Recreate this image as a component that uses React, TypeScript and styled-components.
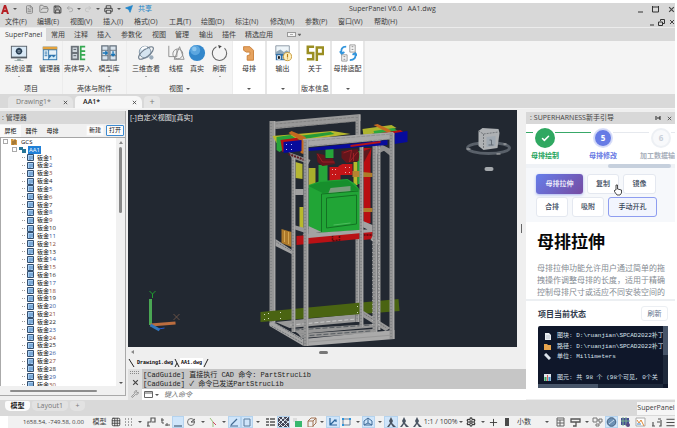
import React from 'react';
import styled, { createGlobalStyle, css } from 'styled-components';
import { Settings, Grid3x3, Menu, Send, Printer, Save, FileText, FolderOpen, Undo2, Redo2, Wrench, Check, Plus } from 'lucide-react';

const ui = '"Open Sans", "Noto Sans CJK SC", sans-serif';
const mono = '"Liberation Mono", "Noto Sans CJK SC", monospace';

const Global = createGlobalStyle`
  * { box-sizing: border-box; }
  body { margin: 0; background: #fff; font-family: ${ui}; font-size: 7px; line-height: 10px; color: #3c3c3c; }
  button, input, select { font: inherit; color: inherit; margin: 0; padding: 0; border: 0; background: none; border-radius: 0; white-space: nowrap; }
  ul, h1, h2, p { margin: 0; padding: 0; list-style: none; }
  svg { display: block; flex: none; }
`;

const Page = styled.div`
  height: 100vh; min-height: 400px; display: flex; flex-direction: column; overflow: hidden;
  padding: 3px 2px 0 0;
`;

/* ---------- title, menu and ribbon ---------- */
const TitleBar = styled.header`
  display: flex; align-items: center; height: 12px; background: #d8d8d8; padding-left: 1px;
`;
const QuickButton = styled.button<{ $w: number }>`
  display: flex; align-items: center; justify-content: center; width: ${p => p.$w}px; height: 12px;
`;
const ShareLink = styled.a`color: #2386c8; text-decoration: none; margin-left: 3px; width: 14px; white-space: nowrap;`;
const WindowTitle = styled.div`margin-left: 197px; flex: 1; white-space: pre;`;
const WindowButtons = styled.div<{ $gap: number }>`display: flex; gap: ${p => p.$gap}px; align-items: center; margin-left: auto;`;
const MenuBar = styled.nav`
  display: flex; align-items: center; height: 13px; background: #d8d8d8; padding: 2px 0 0 5px;
  border-bottom: 1px solid #ececec;
`;
const MenuItem = styled.button<{ $w: number }>`width: ${p => p.$w}px; text-align: left; height: 10px;`;
const RibbonTabs = styled.nav`display: flex; align-items: center; height: 13px; background: #d8d8d8;`;
const RibbonTab = styled.button<{ $w: number; $active?: boolean }>`
  width: ${p => p.$w}px; height: 13px; text-align: left; padding-left: 5px;
  background: ${p => (p.$active ? '#f4f4f4' : 'transparent')};
`;
const Ribbon = styled.div`display: flex; height: 53px; background: #f4f4f4; color: #333;`;
const RibbonGroup = styled.section<{ $w: number; $boxed?: boolean }>`
  width: ${p => p.$w}px; display: flex; flex-direction: column; justify-content: space-between;
  padding-top: 3px; border-right: 1px solid #ececec;
  ${p => p.$boxed && css`background: #fff; border-right: 2px solid #e6e6e6;`}
`;
const Tools = styled.div`display: flex;`;
const Tool = styled.button<{ $w: number }>`
  width: ${p => p.$w}px; display: flex; flex-direction: column; align-items: center; gap: 2px; line-height: 10px;
`;
const GroupLabel = styled.div`display: flex; height: 10px; align-items: center; justify-content: center; gap: 3px;`;
const Caret = styled.span`
  width: 0; height: 0; flex: none; border: 2px solid transparent; border-bottom-width: 0; border-top-color: #555;
`;
const TinyCaret = styled(Caret)`border-width: 1px 1px 0;`;

const DocTabs = styled.nav`
  display: flex; align-items: flex-end; height: 15px; background: #d9d9d9; padding-left: 8px; gap: 2px;
  border-bottom: 1px solid #f5f5f5;
`;
const DocTab = styled.div<{ $w: number; $active?: boolean }>`
  width: ${p => p.$w}px; height: 12px; display: flex; align-items: center; justify-content: space-between;
  padding: 0 5px 0 8px; font-size: 7px; border-radius: 4px 6px 0 0; color: ${p => (p.$active ? '#222' : '#777')};
  background: ${p => (p.$active ? '#f7f7f7' : '#e4e4e4')}; font-weight: ${p => (p.$active ? 600 : 400)};
`;
const AddTab = styled.button`width: 16px; height: 12px; border-radius: 4px 4px 0 0; background: #e6e6e6; color: #777; font-size: 9px;`;

/* ---------- manager panel ---------- */
const Main = styled.main`flex: 1; min-height: 0; display: grid; grid-template-columns: 128px minmax(0, 1fr) 149px; background: #efefef;`;
const SidePanel = styled.aside`
  display: flex; flex-direction: column; min-height: 0; margin: 2px 2px 4px 0; border-right: 1px solid #a9a9a9;
  border-bottom: 1px solid #a9a9a9; background: #f0f0f0;
`;
const PanelTitle = styled.div`
  display: flex; align-items: center; height: 13px; flex: none; background: #d8d8d8; padding: 0 3px 0 2px; gap: 2px;
  color: #444; white-space: nowrap;
`;
const PanelTools = styled.div`display: flex; align-items: center; height: 13px; flex: none; padding: 0 1px 0 0; color: #111;`;
const PanelTab = styled.button<{ $active?: boolean }>`width: 21px; height: 12px; font-size: 6px; background: ${p => (p.$active ? '#fafafa' : 'transparent')};`;
const PanelButton = styled.button<{ $focus?: boolean }>`
  width: 18px; height: 11px; font-size: 6px; line-height: 9px; background: #fcfcfc; margin-left: 2px; border-radius: 1px;
  border: 1px solid ${p => (p.$focus ? '#3c8ad0' : '#f4f4f4')};
`;
const TreeArea = styled.div`flex: 1; min-height: 0; display: flex; border-top: 1px solid #a5a5a5; overflow: hidden;`;
const Tree = styled.ul`
  flex: 1; background: #fff; display: grid; grid-template-rows: repeat(32, 1fr); min-height: 250px; height: 101%;
  font-size: 6px; line-height: 8px; color: #111; border-left: 1px solid #aaa;
`;
const TreeItem = styled.li<{ $indent: number }>`
  display: flex; align-items: center; gap: 2px; min-height: 0; padding-left: ${p => p.$indent}px;
`;
const NodeName = styled.button<{ $selected?: boolean }>`
  height: 8px; line-height: 8px; padding: 0 1px;
  ${p => p.$selected && css`background: #2080d8; color: #fff;`}
`;
const Digits = styled.span<{ $tone: number }>`color: ${p => ['#222', '#31559c', '#8b4a33'][p.$tone]};`;
const Dots = styled.span`width: 3px; border-top: 1px dotted #999;`;
const Expander = styled.span`width: 5px; height: 5px; border: 1px solid #aaa; background: #fff;`;
const VTrack = styled.div`width: 9px; display: flex; flex-direction: column; align-items: center; padding: 3px 0 2px; background: #f1f1f1;`;
const UpArrow = styled(Caret)`border-width: 0 2px 3px; border-bottom-color: #888;`;
const VThumb = styled.div`width: 3px; height: 66px; background: #888; border-radius: 2px; margin: 3px 0 auto;`;
const HTrack = styled.div`height: 9px; flex: none; display: flex; align-items: center; padding-left: 10px;`;
const HThumb = styled.div<{ $w: number }>`width: ${p => p.$w}px; height: 2px; background: #8c8c8c; border-radius: 1px;`;

/* ---------- drawing area ---------- */
const Center = styled.section`display: flex; flex-direction: column; min-width: 0; min-height: 0; padding-top: 1px;`;
const CanvasRow = styled.div`flex: 1; min-height: 0; display: flex;`;
const Canvas = styled.div`flex: 1; min-width: 0; background: #222831; position: relative; overflow: hidden;`;
const Scene = styled.svg`width: 100%; height: 100%;`;
const ViewLabel = styled.div`position: absolute; left: 2px; top: 3px; color: #e6e6e6;`;
const CanvasScroll = styled.div`width: 9px; flex: none; display: flex; align-items: center; justify-content: center;`;
const Grip = styled.div`width: 1px; height: 9px; background: #666;`;
const CanvasHScroll = styled.div`height: 10px; flex: none; display: flex; align-items: center; padding: 0 14px 0 3px;`;
const LeftArrow = styled.span`border: 2px solid transparent; border-left: 0; border-right: 3px solid #888;`;
const CanvasThumb = styled.div`width: 9px; height: 3px; border-radius: 2px; background: #777; margin: 0 auto;`;
const SheetTabs = styled.div`height: 12px; flex: none; display: flex; align-items: center; font: 5px/10px ${mono}; color: #000;`;
const SheetTab = styled.button<{ $active?: boolean }>`
  font-weight: bold; height: 10px; padding: 0 1px; background: ${p => (p.$active ? '#fff' : 'transparent')};
`;
const CommandPane = styled.div`height: 31px; flex: none; display: flex; background: #c6c6c6;`;
const CommandTools = styled.div`width: 14px; background: #e0e0e0; display: flex; flex-direction: column; align-items: center; justify-content: space-between; padding: 2px 0;`;
const CommandMain = styled.div`flex: 1; min-width: 0; display: flex; flex-direction: column;`;
const CommandLog = styled.div`flex: 1; padding: 2px 0 0 1px; font: 7px/9px ${mono}; color: #222; white-space: pre; overflow: hidden;`;
const CommandLine = styled.label`display: flex; align-items: center; gap: 2px; height: 11px; background: #fff; padding-left: 2px;`;
const CommandInput = styled.input`flex: 1; min-width: 0; outline: 0; height: 10px; padding-left: 3px; &::placeholder { color: #777; opacity: 1; font-style: italic; }`;

/* ---------- guide panel ---------- */
const Guide = styled.aside`display: flex; flex-direction: column; min-width: 0; min-height: 0; margin: 3px 0 1px; overflow: hidden; background: #fff;`;
const GuideTitle = styled(PanelTitle)`height: 12px; padding-left: 4px;`;
const Steps = styled.ol`
  display: grid; grid-template-columns: repeat(3, 58px); height: 40px; flex: none; margin: 0 0 0 -10px; padding: 5px 0 0; list-style: none;
`;
const Step = styled.li<{ $color: string; $before: string; $after: string }>`
  display: flex; flex-direction: column; align-items: center; gap: 4px; white-space: nowrap; color: ${p => p.$color};
  background: linear-gradient(90deg, ${p => p.$before} 17px, transparent 17px, transparent 39px, ${p => p.$after} 39px) 0 3px / 100% 1px no-repeat;
  font-weight: 600;
`;
const StepDot = styled.span<{ $bg: string; $ring: string; $fg: string }>`
  width: 18px; height: 18px; border-radius: 50%; display: flex; align-items: center; justify-content: center; flex: none;
  background: ${p => p.$bg}; border: 1px solid ${p => p.$ring}; color: ${p => p.$fg}; font: bold 8px/10px ${ui};
  box-shadow: 0 0 0 1px ${p => p.$ring};
`;
const StepScroll = styled.div`height: 4px; flex: none; background: #eff2f6; display: flex; justify-content: flex-end; padding-right: 4px;`;
const StepThumb = styled.div`width: 63px; background: #c6d0dd; border-radius: 2px;`;
const Actions = styled.div`display: flex; flex-wrap: wrap; gap: 3px 4px; padding: 6px 15px 5px 10px; background: #f6f8fb; flex: none;`;
const ActionButton = styled.button<{ $w: number; $kind?: 'primary' | 'outline' }>`
  width: ${p => p.$w}px; height: 20px; border-radius: 3px; font-size: 7px; font-weight: 500; color: #334155; background: #fff;
  border: 1px solid #e4e8f0;
  ${p => p.$kind === 'primary' && css`background: linear-gradient(135deg, #667eea, #764ba2); color: #fff; border: 0; box-shadow: 0 1px 3px #667eea88;`}
  ${p => p.$kind === 'outline' && css`border: 1px solid #8e9df0; background: #f2f5fe;`}
`;
const Article = styled.article`flex: 1; min-height: 0; overflow: hidden; padding: 9px 4px 0 11px;`;
const Heading = styled.h1`font: bold 17px/20px "Noto Sans CJK SC", sans-serif; color: #080808;`;
const Body = styled.p`margin-top: 11px; font: 8px/12px "Noto Sans CJK SC", sans-serif; color: #858b93;`;
const Status = styled.section`border-top: 2px solid #eceff2; padding: 5px 7px 11px 12px; flex: none;`;
const StatusHead = styled.div`display: flex; align-items: center; justify-content: space-between; height: 15px;`;
const StatusTitle = styled.h2`font: bold 8px/12px ${ui}; color: #303a4b;`;
const Refresh = styled.button`width: 27px; height: 15px; border: 1px solid #eceff3; border-radius: 3px; color: #64748b;`;
const Console = styled.div`
  display: grid; grid-template-columns: minmax(0, 1fr) 5px; grid-template-rows: 58px 4px; margin-top: 5px; background: #0f172a; border-radius: 2px 0 0 0;
`;
const ConsoleLines = styled.ul`
  display: grid; grid-template-rows: repeat(5, 1fr); padding: 5px 0 1px 6px; overflow: hidden; font: 6px/8px ${mono}; color: #dbe3ee; white-space: pre;
`;
const ConsoleLine = styled.li`display: flex; align-items: center; gap: 6px;`;
const ConsoleV = styled.div`background: linear-gradient(#475569 29px, #1e293b 29px);`;
const ConsoleH = styled.div`background: linear-gradient(90deg, #475569 60px, #1e293b 60px);`;
const Pointer = styled.svg`position: fixed; left: 614px; top: 184px; z-index: 2;`;

/* ---------- bottom bars ---------- */
const LayoutTabs = styled.nav`height: 16px; flex: none; display: flex; align-items: center; background: #d9d9d9; padding-left: 5px; gap: 2px;`;
const LayoutTab = styled.button<{ $w: number; $active?: boolean }>`
  width: ${p => p.$w}px; height: 10px; border-radius: 2px 2px 5px 5px; margin-bottom: 4px;
  background: ${p => (p.$active ? '#fbfbfb' : '#e2e2e2')}; color: ${p => (p.$active ? '#222' : '#777')}; font-weight: ${p => (p.$active ? 600 : 400)};
`;
const PanelChip = styled.button`margin-left: auto; width: 38px; height: 13px; background: #f6f6f6; text-align: center;`;
const StatusBar = styled.footer`height: 12px; flex: none; display: flex; align-items: center; margin-left: 8px; background: #f1f1f1; overflow: hidden;`;
const Coords = styled.div`width: 82px; flex: none; padding-left: 15px; font-size: 6px; white-space: nowrap;`;
const StatusItem = styled.button<{ $w: number; $on?: boolean }>`
  width: ${p => p.$w}px; height: 12px; flex: none; display: flex; align-items: center; justify-content: center;
  background: ${p => (p.$on ? '#cfe5fa' : 'transparent')}; outline: ${p => (p.$on ? '1px solid #b5d3ee' : '0')}; outline-offset: -1px;
`;
const Units = styled.label`width: 39px; flex: none; display: flex; align-items: center; justify-content: space-between; padding: 0 4px 0 3px;`;
const UnitSelect = styled.select`appearance: none; width: 24px; height: 11px; outline: 0;`;

/* ---------- small drawings ---------- */
const glyphs: Record<string, React.ReactNode> = {
  system: <><rect x="1" y="2" width="18" height="14" fill="#555d66" /><rect x="2" y="3" width="16" height="11" fill="#d9e9f6" /><circle cx="10" cy="8" r="2.6" fill="none" stroke="#253b50" strokeWidth="1.7" /><path d="M10 4v8M6 8h8" stroke="#253b50" strokeWidth=".8" /><path d="M8 16h4v2h3v1H5v-1h3z" fill="#9aa" /></>,
  manager: <><path d="M2 3h16v15H2z" fill="#2e74ad" /><path d="M2 3h16v3H2z" fill="#e4a23c" /><path d="M3 7h5v10H3zM9 7h8v5H9z" fill="#e6f1f8" /><path d="m9 16 3-3 2 2 3-3v5H9z" fill="#cfe9f6" /><path d="M4 9h3M4 11h3M4 13h3" stroke="#2e74ad" /></>,
  import: <><path d="M2 2h9v16H2z" fill="#6b7279" /><path d="M4 4h5v5H4zM4 11h5v5H4z" fill="#cfd6dc" /><path d="M5 6h3M5 13h3" stroke="#4c555e" /><path d="M18 3h-5v14h5M13 8h5M13 12h5" stroke="#36a852" strokeWidth="2" fill="none" /></>,
  library: <><path d="M2 2h7v16H2zM11 2h7v16h-7z" fill="#d8e3ec" stroke="#66727e" strokeWidth="1.4" /><path d="M2 7h7M2 13h7M11 7h7M11 13h7" stroke="#66727e" /><path d="M3 10h5M6 8l2 2-2 2M14.5 8v5M12.5 11l2 2 2-2" stroke="#1976b8" strokeWidth="1.5" fill="none" /></>,
  orbit: <><circle cx="9" cy="9" r="6.5" fill="#d5e4f0" stroke="#7f93a5" /><ellipse cx="10" cy="10" rx="10" ry="4" transform="rotate(-38 10 10)" fill="none" stroke="#6f7e8d" strokeWidth="1.3" /><path d="M5 6a5 5 0 0 1 6-2" stroke="#fff" strokeWidth="2" fill="none" /><circle cx="16" cy="15" r="2.4" fill="#9aabba" /></>,
  wire: <g fill="none" stroke="#8b8b8b"><path d="M2 2v12h9V6" /><circle cx="12" cy="11" r="5.5" /><path d="M8 17 14 3l5 14z" /></g>,
  real: <><circle cx="10" cy="10" r="9" fill="#3387cb" /><circle cx="8" cy="7" r="5.5" fill="#5ca6df" /><circle cx="7" cy="5.5" r="2.5" fill="#8bc6ef" /></>,
  reload: <><path d="M6 3a8 8 0 1 0 9 1.500" stroke="#666" strokeWidth="1.2" fill="none" /><path d="m8 1 4 1.500L9 5z" fill="#444" /></>,
  busbar: <path d="M4 3h7l4 4v11H8v-5l3-1V9H7L4 7z" fill="#e6a35f" stroke="#c87e37" />,
  output: <><path d="M2 2h15v10H2z" fill="#eef5f9" stroke="#8794a0" /><path d="m2 9 5-3 4 3 3-2 3 2v3H2z" fill="#8fa8ba" /><path d="M2 11h13v7H2z" fill="#2f6fa8" /><path d="M4 13v4M4 13h3v4H4M10 13v4M13 13v4" stroke="#fff" /><circle cx="15" cy="14" r="4.5" fill="#fff0bd" stroke="#c69634" /><path d="M15 11v4M15 16v1" stroke="#b57c16" strokeWidth="1.3" /></>,
  sp: <path d="M9 3H2v7h6v7H1M12 19V4h7v7h-6" fill="none" stroke="#9a8e22" strokeWidth="2.8" />,
  adapt: <><path d="M8 3C3 3 2 6 3 10M1 8l2 3 3-2M12 18c5 0 7-3 6-7M20 13l-2-3-3 2" stroke="#3295dc" strokeWidth="2" fill="none" /><path d="M12 1h6v8h-6zM3 12h6v7H3z" fill="#f5f5f5" stroke="#999" /><path d="M14 3h2M14 6h2M5 14h2M5 17h2" stroke="#888" /></>,
};
const Glyph = ({ name }: { name: string }) => <svg width="18" height="18" viewBox="0 0 20 20" aria-hidden="true">{glyphs[name]}</svg>;

const statusGlyphs: Record<string, React.ReactNode> = {
  dots: <path d="M2 2h1M5 2h1M8 2h1M2 5h1M5 5h1M8 5h1M2 8h1M5 8h1M8 8h1" stroke="#555" />,
  snap: <path d="M2 9V5h3V1h4v4H6M1 9h3" stroke="#555" fill="none" strokeWidth="1.2" />,
  infer: <path d="M2 1v5h2M1 3h3M5 8h5M7 6v3" stroke="#555" fill="none" />,
  ortho: <path d="M1 9h8" stroke="#445f7a" strokeWidth="1.2" />,
  polar: <><circle cx="5" cy="5" r="3.5" fill="none" stroke="#777" /><path d="M5 5l4-3M5 5h4" stroke="#555" /></>,
  iso: <><path d="M2 1 5 5v5" stroke="#9bbf78" fill="none" /><path d="M5 5 8 8" stroke="#c46" /></>,
  track: <path d="M1 9h8M2 8 8 2" stroke="#456c93" fill="none" strokeWidth="1.2" />,
  osnap: <path d="M2 2h6v7H2z" stroke="#5a7c9d" fill="none" />,
  weight: <path d="M1 2h3M1 5h3M1 8h3M5 2h5M5 5h5M5 8h5" stroke="#555" strokeWidth="1.5" />,
  hatch: <><path d="M0 0h11v10H0z" fill="#445" /><path d="m0 0 10 10M4 0l7 6M0 5l5 5M10 0 0 10M6 0 0 6M11 4l-6 6" stroke="#dce6ef" /></>,
  cycle: <><path d="M1 1h4v4H1z" fill="#ddd" /><path d="M3 4h7v6H3z" fill="#39b86e" /></>,
  cube: <path d="M2 4h5v6H2zM2 4l3-3h5v5L7 9M7 4l3-3" fill="none" stroke="#a17354" />,
  ucs: <path d="M2 1v7h7M2 8l5-5M6 3h2v2" fill="none" stroke="#28639a" strokeWidth="1.2" />,
  select: <><path d="M2 2h7v6H2z" fill="none" stroke="#68819a" /><path d="M1 1h2v2H1zM8 1h2v2H8zM1 7h2v2H1z" fill="#2c93dc" /></>,
  gizmo: <path d="M5 1 9 4v4H1V4zM5 1v5L1 8M5 6l4 2" fill="none" stroke="#416d99" />,
  person: <path d="m5 0 2 4-1 2 4 4H7L5 7l-2 3H1l3-4-1-2z" fill="#4b5563" />,
  block: <path d="M3 1h4v8H3z" fill="#4a4a4a" />,
  props: <path d="M2 1h7v8H2zM2 3h7M2 6h7M5 3v6" fill="none" stroke="#666" />,
  lock: <path d="M1 2h9v3H1zM6 5v4H3" fill="none" stroke="#555" strokeWidth="1.3" />,
  isolate: <path d="M1 1h4v4H1zM7 2h3v3H7zM4 7h3v2H4zM5 3h2M8 5v2" fill="none" stroke="#777" />,
  disc: <><circle cx="5.5" cy="5" r="4.3" fill="#6d91b5" stroke="#46617e" /><path d="M3 7 8 3" stroke="#cde" /></>,
  gpu: <><path d="M1 1h8v7H1z" fill="#454c94" /><path d="M3 0v9M6 0v9M1 4h9" stroke="#7bb08c" /><circle cx="8" cy="8" r="2" fill="#584a82" /></>,
  chart: <><path d="M1 1h9v8H1z" fill="#fff" stroke="#aaa" /><path d="m2 3 2 3 2-3 3 6" fill="none" stroke="#dd8838" /><path d="M2 7h4" stroke="#3888c8" /></>,
  full: <path d="M1 9h3M8 9h2V3M7 2h3M2 5v4M6 5h3" fill="none" stroke="#555" strokeWidth="1.2" />,
};
const StatusGlyph = ({ name }: { name: string }) => <svg width="11" height="10" viewBox="0 0 11 10" aria-hidden="true">{statusGlyphs[name]}</svg>;

const Close = ({ s = 6 }: { s?: number }) => <svg width={s} height={s} viewBox="0 0 6 6" aria-hidden="true"><path d="M1 1l4 4M5 1 1 5" stroke="#444" strokeWidth="1" /></svg>;

/* A perforated upright of the cabinet frame. */
const Post = ({ x, y, w, h }: { x: number; y: number; w: number; h: number }) => (
  <g>
    <rect x={x} y={y} width={w} height={h} fill="#959595" />
    <path d={`M${x + w - 1} ${y}v${h}`} stroke="#a9a9a9" />
    <path d={`M${x + 1.5} ${y + 2}v${h - 3}`} stroke="#74787b" strokeDasharray="1 2" />
  </g>
);

const Cabinet = () => (
  <Scene viewBox="128 110 388 237" preserveAspectRatio="xMidYMid meet" role="img" aria-label="三维机柜模型">
    <path d="M270 122 360 114v7l-85 8z" fill="#999" />
    <path d="m275 124 82-7M275 128l84-7" stroke="#777" strokeWidth=".7" strokeDasharray="3 1" />
    <Post x={355} y={115} w={5} h={24} />
    <Post x={355} y={238} w={4} h={84} />
    <Post x={269} y={121} w={6} h={204} />
    <path d="m272 136 60-5 18 3-44 6-30 3z" fill="#b8b92c" />
    <path d="m276 137 14-2 8 5-19 12-3-2z" fill="#28a33a" /><path d="m280 140 22-3 1 8-21 7z" fill="#b61214" />
    <path d="m298 136 32-4 4 2-36 6z" fill="#259b38" />
    <path d="m362 129 29-4 5 3-33 8z" fill="#aeb42e" /><path d="m373 131 20-3 6 4-24 5z" fill="#2da73e" /><path d="m380 133 20-3 4 3-24 5z" fill="#b61214" />
    <path d="m288 133 3-2 14 6 1 4-3 13-3-1 1-12zM373 125l4-1 13 6v4z" fill="#c46a20" />
    <path d="m288 152 22 8-2 4-17-6z" fill="#8d8d8d" /><path d="m288 154 16 6" stroke="#601a20" strokeWidth="2" strokeDasharray="2 1" />
    <path d="m380 144 10 5v7l-10-8zM373 146l14 3-12 6z" fill="#8e8e8e" />
    <path d="m295 162 7 2v15l-7-1z" fill="#b6b733" /><path d="M308 168h7v20h-7z" fill="#a9af2c" /><path d="M299 207h4v23h-4zM353 162h4v23h-4z" fill="#b8b92c" />
    <path d="m325 149 8-1v10h-8zM318 165h9v21h-9zM357 151h4v33h-4z" fill="#26a53a" />
    <path d="m316 153 8 2 1 4 7-1 3 6-13 2-5-4zM341 151l16-2 2 5-1 7-12 2-5-5z" fill="#64151b" />
    <path d="m317 154 5 8h12M343 153l8-3-2 12 8-10M353 153v8" stroke="#aa2228" fill="none" strokeWidth=".8" />
    <path d="M329 167h9v-1l4-2h10v11h-12v6h-11z" fill="#c41518" />
    <path d="M332 169v1M335 169v1M332 174v1M335 174v1M345 167v1M349 167v1M345 172v1M349 172v1" stroke="#e6b0b0" />
    <path d="M352 171h7v6h-7z" fill="#b58430" />
    <path d="M363 148h8l-1 12v63l-7 2z" fill="#b80e12" /><path d="m371 148-8 15v-12z" fill="#5f191e" />
    <path d="m362 172 10 1v4h-10zM362 208h10v4h-10z" fill="#ad7b29" />
    <path d="m308 185 12-4 27-2 8 5 5 7v39l-39 3-13-5z" fill="#21a536" />
    <path d="m308 186 12-4 27-2 12 10-37 3z" fill="#178f2c" /><path d="m321 194 37-3M321 194v38M326 198l30-3v29l-30 4z" stroke="#137323" fill="none" />
    <path d="m330 188 20-2v5l-22 2z" fill="#7b9c7d" /><path d="m333 225 17-2" stroke="#4cbc5c" />
    <path d="m293 225 15 4v5l-15-5z" fill="#999" />
    <path d="m296 236 63-5v8l-63 6zM363 232l9-1v8l-9 1z" fill="#b91115" />
    <path d="m332 235 7-1v6l-7 1zM363 235h8" stroke="#570a0c" strokeWidth="1.5" strokeDasharray="2 1" fill="none" />
    <path d="m302 234 12-1 58-4v3l-64 6zM360 220l12 5v7l-12-6zM308 226l13 6-13 2z" fill="#a3a3a3" />
    <path d="m281 229 10 3v15l-10-4z" fill="#ad792a" /><path d="M284 231v11M288 232v12" stroke="#d3a450" />
    <path d="m275 239 18 12v4l-18-9zM372 236l7 5v4l-9-5zM294 189h9v6h-9z" fill="#a1a1a1" />
    <path d="m276 242 15 9" stroke="#5d6266" strokeDasharray="1 1" />

    <path d="m275 322 80-8v8l-66 6z" fill="#999" /><path d="m290 325 66-6" stroke="#ddd" strokeWidth=".7" strokeDasharray="4 2" />
    <path d="m260 312 138-13 1 12-139 11z" fill="#4a6412" />
    <path d="M264 314v1M264 319v1M268 313v1M268 318v1M280 312v1M280 318v1M357 306v1M357 312v1" stroke="#d5ddc0" />
    <path d="m269 323 4-1 30 17v7l-34-20z" fill="#a6a6a6" /><path d="m274 323 28 17M271 326l31 17" stroke="#74787b" strokeDasharray="2 1" />
    <path d="m291 329 81-5 6 3-80 7zM298 334l75-5v4l-72 5z" fill="#969696" /><path d="m294 330 77-5M302 336l68-5" stroke="#555b60" strokeDasharray="5 2" />
    <path d="m363 311 27 17-5 3-26-16z" fill="#999" /><path d="m364 314 22 14" stroke="#666" strokeDasharray="1 1" />
    <path d="m303 339 91-9v9l-88 7z" fill="#aaa" /><path d="m308 342 85-7" stroke="#999" />

    <Post x={291} y={158} w={4} h={174} />
    <Post x={359} y={145} w={4} h={182} />
    <Post x={372} y={138} w={5} h={194} />
    <Post x={377} y={138} w={3} h={192} />
    <path d="m283 142 18-2v11l-18 2zM308 148l79-8v5l-79 6zM394 133l13-2v11l-13 2z" fill="#070b9b" />
    <path d="M286 144v1M291 144v1M286 149v1M291 149v1" stroke="#c0c4ff" />
    <path d="m350 145 30-4v2l-30 4z" fill="#b61418" />
    <path d="m302 139 91-7v7l-85 8z" fill="#a8a8a8" /><path d="m306 141 85-7M308 146l82-7" stroke="#888" strokeWidth=".7" strokeDasharray="4 1" />
    <Post x={303} y={140} w={5} h={206} />
    <Post x={389} y={133} w={5} h={206} />
    <path d="M372 240v88M378 240v88" stroke="#c5c5c5" strokeDasharray="1 3" strokeWidth=".6" />

    <path d="M150 325v-26" stroke="#4aa653" strokeWidth="3" /><path d="m150 325 25-2" stroke="#bb6d3f" strokeWidth="3" /><path d="m150 325 9 5" stroke="#3276bb" strokeWidth="3" /><path d="m158 329 6-1" stroke="#245bd2" />
    <path d="m149 291 3 3 3-3M152 294v4" stroke="#1f9d2f" fill="none" /><path d="m173 314 6 6M179 314l-6 6" stroke="#785b4b" strokeWidth=".8" />

    <ellipse cx="488" cy="148" rx="21" ry="5.5" fill="none" stroke="#596069" strokeWidth="3" />
    <path d="m478 131 4-3 16 1 1 4-2 15-14 2-5-4z" fill="#aeb1b4" /><path d="m478 131 5 3 15-2M483 134v15" stroke="#74787c" fill="none" strokeDasharray="2 1" />
    <path d="m486 137 9-1v10l-9 1z" fill="#a0a9b2" /><path d="M489 140h2v5M488 145h5" stroke="#626b74" fill="none" />
    <rect x="484" y="167" width="9" height="4" rx="2" fill="#a4a8ac" />
    <path d="M466 149h4M496 154h4M503 144h3" stroke="#bbb" />
  </Scene>
);

const menus: [string, number][] = [['文件(F)', 32], ['编辑(E)', 33], ['视图(V)', 33], ['插入(I)', 31], ['格式(O)', 35], ['工具(T)', 32], ['绘图(D)', 34], ['标注(N)', 35], ['修改(M)', 35], ['参数(P)', 33], ['窗口(W)', 36], ['帮助(H)', 30]];
const ribbonTabs: [string, number][] = [['SuperPanel', 46], ['常用', 23], ['注释', 23], ['插入', 24], ['参数化', 31], ['视图', 23], ['管理', 24], ['输出', 23], ['插件', 23], ['精选应用', 43]];
const groups: { label: string; w: number; caret?: boolean; boxed?: boolean; tools: [string, string, number, boolean?][] }[] = [
  { label: '项目', w: 63, tools: [['system', '系统设置', 37, true], ['manager', '管理器', 25]] },
  { label: '壳体与附件', w: 64, tools: [['import', '壳体导入', 30], ['library', '模型库', 32, true]] },
  { label: '视图', w: 106, caret: true, tools: [['orbit', '三维查看', 38, true], ['wire', '线框', 22], ['real', '真实', 20], ['reload', '刷新', 25, true]] },
  { label: '', w: 34, caret: true, boxed: true, tools: [['busbar', '母排', 32]] },
  { label: '', w: 33, caret: true, boxed: true, tools: [['output', '输出', 31]] },
  { label: '版本信息', w: 32, boxed: true, tools: [['sp', '关于', 30]] },
  { label: '', w: 33, caret: true, boxed: true, tools: [['adapt', '母排适配', 31]] },
];
const statusItems: [string, number, boolean?][] = [
  ['grid', 13], ['dots', 13], ['caret', 9], ['snap', 15], ['infer', 13], ['ortho', 12, true], ['polar', 14], ['caret', 9], ['iso', 13], ['caret', 8],
  ['track', 13, true], ['osnap', 12, true], ['caret', 10], ['weight', 14], ['hatch', 13, true], ['cycle', 15], ['cube', 13], ['caret', 8],
  ['ucs', 14, true], ['select', 13], ['caret', 9], ['gizmo', 13, true], ['caret', 9], ['person', 14, true], ['person', 12], ['person', 14],
];
const statusRight: [string, number, boolean?][] = [['props', 14], ['lock', 17], ['caret', 6], ['isolate', 15], ['disc', 13, true], ['gpu', 15], ['chart', 15], ['full', 16], ['menu', 12]];

const StatusIcon = ({ name }: { name: string }) => {
  if (name === 'grid') return <Grid3x3 size={10} strokeWidth={2} />;
  if (name === 'caret') return <Caret />;
  if (name === 'menu') return <Menu size={11} strokeWidth={2} />;
  return <StatusGlyph name={name} />;
};
const StatusButtons = ({ items }: { items: [string, number, boolean?][] }) => (
  <>{items.map(([n, w, on], i) => <StatusItem key={i} $w={w} $on={on} aria-label={n}><StatusIcon name={n} /></StatusItem>)}</>
);

const actions: [string, number, ('primary' | 'outline')?][] = [['母排拉伸', 47, 'primary'], ['复制', 32], ['镜像', 33], ['合排', 32], ['吸附', 32], ['手动开孔', 49, 'outline']];

export default function App() {
  return (
    <Page>
      <Global />
      <TitleBar>
        <QuickButton $w={9} aria-label="应用程序"><svg width="9" height="9" viewBox="0 0 9 9"><path d="M0 9 3 0h2l3 9H6L4 3 2 9zM2 5h4v2H2z" fill="#b62025" /></svg></QuickButton>
        <QuickButton $w={10} aria-label="展开"><Caret /></QuickButton>
        <QuickButton $w={18} aria-label="新建"><FileText size={9} color="#777" /></QuickButton>
        <QuickButton $w={12} aria-label="打开"><FolderOpen size={10} color="#777" /></QuickButton>
        <QuickButton $w={14} aria-label="保存"><Save size={9} color="#555" strokeWidth={3} /></QuickButton>
        <QuickButton $w={12} aria-label="撤销"><Undo2 size={8} color="#999" /></QuickButton>
        <QuickButton $w={6} aria-label="撤销列表"><Caret /></QuickButton>
        <QuickButton $w={12} aria-label="重做"><Redo2 size={8} color="#bbb" /></QuickButton>
        <QuickButton $w={8} aria-label="重做列表"><Caret /></QuickButton>
        <QuickButton $w={12} aria-label="打印"><Printer size={9} color="#555" strokeWidth={3} /></QuickButton>
        <QuickButton $w={9} aria-label="自定义"><Caret /></QuickButton>
        <QuickButton $w={12} aria-label="发送"><Send size={8} color="#2387cb" fill="#2387cb" /></QuickButton>
        <ShareLink href="#share">共享</ShareLink>
        <WindowTitle>SuperPanel V6.0   AA1.dwg</WindowTitle>
        <WindowButtons $gap={9}>
          <button aria-label="最小化"><svg width="5" height="8"><path d="M0 7h5" stroke="#333" /></svg></button>
          <button aria-label="最大化"><svg width="7" height="7"><path d="M0 1h7M.5 0v6h6V0" stroke="#333" fill="none" /></svg></button>
          <button aria-label="关闭"><Close s={7} /></button>
        </WindowButtons>
      </TitleBar>
      <MenuBar>
        {menus.map(([m, w]) => <MenuItem key={m} $w={w}>{m}</MenuItem>)}
        <WindowButtons $gap={4}>
          <button aria-label="最小化文档"><svg width="4" height="8"><path d="M0 7h4" stroke="#333" /></svg></button>
          <button aria-label="还原文档"><svg width="7" height="7"><path d="M2.5 2V.5h4v4H5M.5 3h4v3.500h-4z" stroke="#333" fill="none" /></svg></button>
          <button aria-label="关闭文档"><Close /></button>
        </WindowButtons>
      </MenuBar>
      <RibbonTabs>
        {ribbonTabs.map(([t, w], i) => <RibbonTab key={t} $w={w} $active={i === 0}>{t}</RibbonTab>)}
        <QuickButton $w={22} aria-label="功能区显示"><svg width="14" height="5" viewBox="0 0 14 5"><rect x=".5" y=".5" width="8" height="4" fill="#f4f4f4" stroke="#999" /><path d="M3 2.500h3M11 2h3l-1.500 2z" stroke="#666" fill="#666" strokeWidth=".5" /></svg></QuickButton>
      </RibbonTabs>
      <Ribbon>
        {groups.map((g, i) => (
          <RibbonGroup key={i} $w={g.w} $boxed={g.boxed}>
            <Tools>
              {g.tools.map(([ic, name, w, c]) => <Tool key={name} $w={w}><Glyph name={ic} />{name}{c && <TinyCaret />}</Tool>)}
            </Tools>
            <GroupLabel>{g.label}{g.caret && <Caret />}</GroupLabel>
          </RibbonGroup>
        ))}
      </Ribbon>
      <DocTabs>
        <DocTab $w={65}><button>Drawing1*</button><button aria-label="关闭 Drawing1"><Close s={5} /></button></DocTab>
        <DocTab $w={67} $active><button>AA1*</button><button aria-label="关闭 AA1"><Close s={5} /></button></DocTab>
        <AddTab>+</AddTab>
      </DocTabs>

      <Main>
        <SidePanel>
          <PanelTitle><span>:</span>管理器</PanelTitle>
          <PanelTools>
            <PanelTab $active>屏柜</PanelTab><PanelTab>器件</PanelTab><PanelTab>母排</PanelTab>
            <WindowButtons $gap={0}><PanelButton>新建</PanelButton><PanelButton $focus>打开</PanelButton></WindowButtons>
          </PanelTools>
          <TreeArea>
            <Tree>
              <TreeItem $indent={2}><Expander /><svg width="8" height="7"><path d="M1 1h2l1 1h3v5H1z" fill="#d59b43" /><path d="M3 3v4M5 1v5" stroke="#775b31" /></svg><NodeName>GCS</NodeName></TreeItem>
              <TreeItem $indent={11}><Expander /><svg width="7" height="7"><path d="M0 1h4v3H0zM3 3h4v4H3z" fill="#267596" /></svg><NodeName $selected>AA1</NodeName></TreeItem>
              {Array.from({ length: 30 }, (_, i) => (
                <TreeItem key={i} $indent={21}>
                  <Dots />
                  <svg width="7" height="7"><path d="M.5.5h6v6h-6z" fill="#a9d0f5" stroke="#35506f" /><path d="M2 3h2M5 2v3M2 5h2" stroke="#4b80b6" /></svg>
                  <NodeName>钣金<Digits $tone={i % 3}>{i + 1}</Digits></NodeName>
                </TreeItem>
              ))}
            </Tree>
            <VTrack><UpArrow /><VThumb /><Caret /></VTrack>
          </TreeArea>
          <HTrack><HThumb $w={87} /></HTrack>
        </SidePanel>

        <Center>
          <CanvasRow>
            <Canvas><Cabinet /><ViewLabel>[-]自定义视图][真实]</ViewLabel></Canvas>
            <CanvasScroll><Grip /></CanvasScroll>
          </CanvasRow>
          <CanvasHScroll><LeftArrow /><CanvasThumb /></CanvasHScroll>
          <SheetTabs>
            <svg width="8" height="10"><path d="m1 1 5 8" stroke="#222" /></svg>
            <SheetTab>Drawing1.dwg</SheetTab>
            <svg width="6" height="10"><path d="m1 1 2 4-2 4M3 5l2 4" stroke="#222" fill="none" /></svg>
            <SheetTab $active>AA1.dwg</SheetTab>
            <svg width="6" height="10"><path d="M5 1 1 9" stroke="#222" /></svg>
          </SheetTabs>
          <CommandPane>
            <CommandTools>
              <svg width="10" height="3"><path d="M0 .5h10M0 2.500h10" stroke="#888" strokeDasharray="1 1" /></svg>
              <Close s={7} /><Wrench size={8} color="#777" />
            </CommandTools>
            <CommandMain>
              <CommandLog>{'[CadGuide] 直接执行 CAD 命令: PartStrucLib\n[CadGuide] ✓ 命令已发送PartStrucLib'}</CommandLog>
              <CommandLine><svg width="9" height="7"><path d="M.5.5h8v6h-8zM0 2h9" stroke="#666" fill="none" /></svg><Caret /><CommandInput aria-label="命令" placeholder="键入命令" /></CommandLine>
            </CommandMain>
          </CommandPane>
        </Center>

        <Guide>
          <GuideTitle>
            <span>:</span>SUPERHARNESS新手引导
            <WindowButtons $gap={6}>
              <button aria-label="自动隐藏"><svg width="6" height="6"><path d="M1 1v4M5 1v4M2 3h3" stroke="#222" /></svg></button>
              <button aria-label="关闭面板"><Close s={5} /></button>
            </WindowButtons>
          </GuideTitle>
          <Steps>
            <Step $color="#23a35b" $before="#38a868" $after="#38a868"><StepDot $bg="#2fa861" $ring="#2fa861" $fg="#fff"><Check size={9} strokeWidth={4} /></StepDot>母排绘制</Step>
            <Step $color="#6577e3" $before="#38a868" $after="#e6e9ee"><StepDot $bg="#667be5" $ring="#d8def9" $fg="#fff">5</StepDot>母排修改</Step>
            <Step $color="#a8b0bb" $before="#e6e9ee" $after="#e6e9ee"><StepDot $bg="#f8f9fb" $ring="#edf0f4" $fg="#c9d0d9">6</StepDot>加工数据输出</Step>
          </Steps>
          <StepScroll><StepThumb /></StepScroll>
          <Actions>{actions.map(([n, w, k]) => <ActionButton key={n} $w={w} $kind={k}>{n}</ActionButton>)}</Actions>
          <Article>
            <Heading>母排拉伸</Heading>
            <Body>母排拉伸功能允许用户通过简单的拖拽操作调整母排的长度，适用于精确控制母排尺寸或适应不同安装空间的</Body>
          </Article>
          <Status>
            <StatusHead><StatusTitle>项目当前状态</StatusTitle><Refresh>刷新</Refresh></StatusHead>
            <Console>
              <ConsoleLines>
                <ConsoleLine><svg width="7" height="8"><path d="M1 1h4l2 2v5H1z" fill="#e9edf2" /><path d="M2 4h4M2 6h4" stroke="#8996a5" strokeWidth=".5" /></svg>图块: D:\ruanjian\SPCAD2022补丁</ConsoleLine>
                <ConsoleLine><svg width="7" height="7"><path d="M0 1h3l1 1h3v5H0z" fill="#e7a44e" /></svg>路径: D:\ruanjian\SPCAD2022补丁</ConsoleLine>
                <ConsoleLine><svg width="7" height="7"><path d="m1 1 5 5" stroke="#dce3eb" strokeWidth="3" /></svg>单位: Millimeters</ConsoleLine>
                <ConsoleLine />
                <ConsoleLine><svg width="7" height="7"><path d="M0 0h7v7H0z" fill="#dfe6ec" /><path d="M1.5 7V3" stroke="#3ba75f" strokeWidth="2" /><path d="M3.5 7V1" stroke="#d65d58" /><path d="M5.5 7V3" stroke="#398fcb" strokeWidth="2" /></svg>图元: 共 98 个 (98个可见, 0个关</ConsoleLine>
              </ConsoleLines>
              <ConsoleV /><ConsoleH /><span />
            </Console>
          </Status>
        </Guide>
      </Main>

      <LayoutTabs>
        <LayoutTab $w={25} $active>模型</LayoutTab><LayoutTab $w={36}>Layout1</LayoutTab><LayoutTab $w={15}>+</LayoutTab>
        <PanelChip>SuperPanel</PanelChip>
      </LayoutTabs>
      <StatusBar>
        <Coords>1658.54, -749.58, 0.00</Coords>
        <StatusItem $w={19}>模型</StatusItem>
        <StatusButtons items={statusItems} />
        <StatusItem $w={39}>1:1 / 100%&nbsp;<Caret /></StatusItem>
        <StatusItem $w={16} aria-label="设置"><Settings size={10} strokeWidth={3} /></StatusItem>
        <StatusItem $w={7} aria-label="设置列表"><Caret /></StatusItem>
        <StatusItem $w={15} aria-label="添加"><Plus size={11} /></StatusItem>
        <StatusItem $w={13} aria-label="单位"><StatusGlyph name="block" /></StatusItem>
        <Units><UnitSelect aria-label="单位格式"><option>小数</option></UnitSelect><Caret /></Units>
        <StatusButtons items={statusRight} />
      </StatusBar>
      <Pointer width="8" height="12" viewBox="0 0 8 12"><path d="M2 6V1h1.500v4l4 1v3L6 11H3L0 7l1-1z" fill="#fff" stroke="#222" strokeWidth=".8" /></Pointer>
    </Page>
  );
}
